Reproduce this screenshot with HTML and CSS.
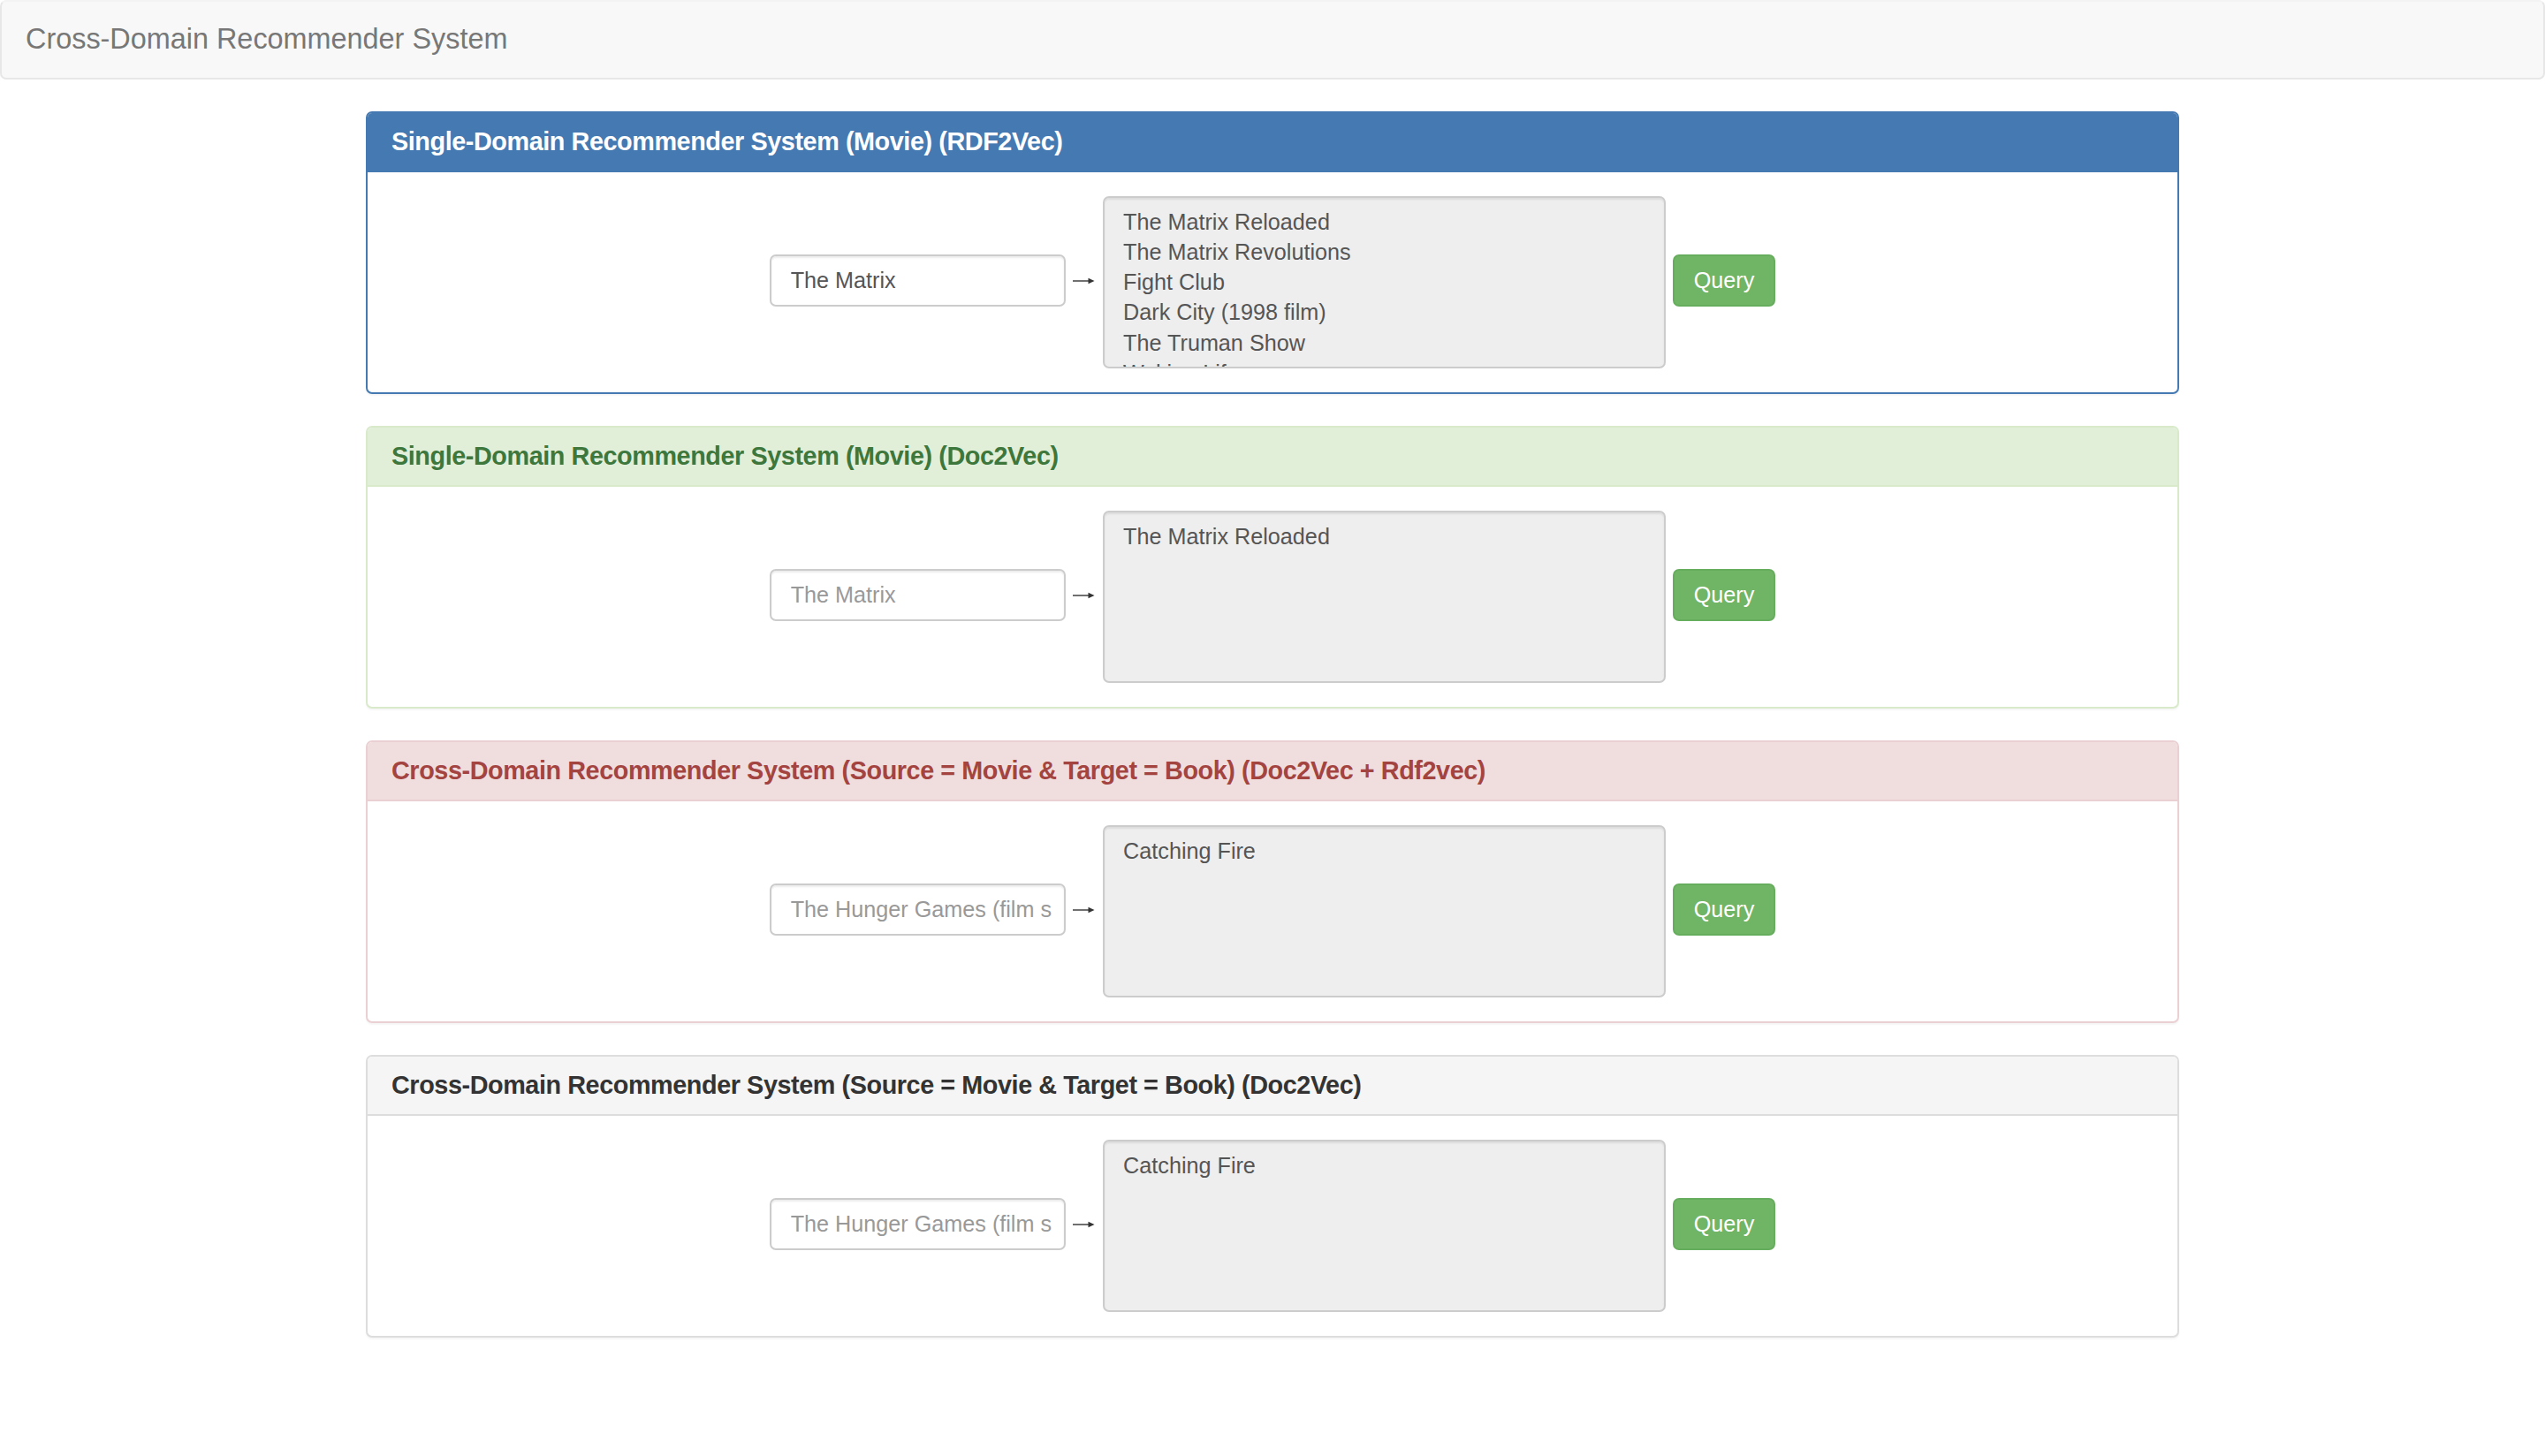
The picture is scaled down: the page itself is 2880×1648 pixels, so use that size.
FILE: index.html
```html
<!DOCTYPE html>
<html lang="en">
<head>
<meta charset="utf-8">
<title>Cross-Domain Recommender System</title>
<link rel="stylesheet" href="styles.css">
</head>
<body>
<nav class="navbar">
  <span class="brand">Cross-Domain Recommender System</span>
</nav>
<main class="container">
  <section class="panel panel-primary">
    <div class="panel-heading"><h3 class="panel-title">Single-Domain Recommender System (Movie) (RDF2Vec)</h3></div>
    <div class="panel-body">
      <div class="query-row">
        <input class="form-control" type="text" value="The Matrix">
        <span class="arrow" aria-label="→"><svg width="25" height="10" viewBox="0 0 25 10"><path d="M0 5H21" stroke="#333" stroke-width="1.4" fill="none"/><path d="M17.5 1.8L24.5 5L17.5 8.2Z" fill="#333"/></svg></span>
        <textarea class="results" readonly>The Matrix Reloaded
The Matrix Revolutions
Fight Club
Dark City (1998 film)
The Truman Show
Waking Life</textarea>
        <button class="btn btn-success" type="button">Query</button>
      </div>
    </div>
  </section>

  <section class="panel panel-success">
    <div class="panel-heading"><h3 class="panel-title">Single-Domain Recommender System (Movie) (Doc2Vec)</h3></div>
    <div class="panel-body">
      <div class="query-row">
        <input class="form-control" type="text" placeholder="The Matrix">
        <span class="arrow" aria-label="→"><svg width="25" height="10" viewBox="0 0 25 10"><path d="M0 5H21" stroke="#333" stroke-width="1.4" fill="none"/><path d="M17.5 1.8L24.5 5L17.5 8.2Z" fill="#333"/></svg></span>
        <textarea class="results" readonly>The Matrix Reloaded</textarea>
        <button class="btn btn-success" type="button">Query</button>
      </div>
    </div>
  </section>

  <section class="panel panel-danger">
    <div class="panel-heading"><h3 class="panel-title">Cross-Domain Recommender System (Source = Movie &amp; Target = Book) (Doc2Vec + Rdf2vec)</h3></div>
    <div class="panel-body">
      <div class="query-row">
        <input class="form-control" type="text" placeholder="The Hunger Games (film series)">
        <span class="arrow" aria-label="→"><svg width="25" height="10" viewBox="0 0 25 10"><path d="M0 5H21" stroke="#333" stroke-width="1.4" fill="none"/><path d="M17.5 1.8L24.5 5L17.5 8.2Z" fill="#333"/></svg></span>
        <textarea class="results" readonly>Catching Fire</textarea>
        <button class="btn btn-success" type="button">Query</button>
      </div>
    </div>
  </section>

  <section class="panel panel-default">
    <div class="panel-heading"><h3 class="panel-title">Cross-Domain Recommender System (Source = Movie &amp; Target = Book) (Doc2Vec)</h3></div>
    <div class="panel-body">
      <div class="query-row">
        <input class="form-control" type="text" placeholder="The Hunger Games (film series)">
        <span class="arrow" aria-label="→"><svg width="25" height="10" viewBox="0 0 25 10"><path d="M0 5H21" stroke="#333" stroke-width="1.4" fill="none"/><path d="M17.5 1.8L24.5 5L17.5 8.2Z" fill="#333"/></svg></span>
        <textarea class="results" readonly>Catching Fire</textarea>
        <button class="btn btn-success" type="button">Query</button>
      </div>
    </div>
  </section>
</main>
</body>
</html>
```

FILE: styles.css
```css
* {
  box-sizing: border-box;
}

html, body {
  margin: 0;
  padding: 0;
  background: #fff;
}

body {
  font-family: "Liberation Sans", Arial, Helvetica, sans-serif;
  font-size: 25.2px;
  line-height: 36px;
  color: #333;
}

/* Navbar */
.navbar {
  display: flex;
  align-items: center;
  height: 90px;
  background: #f8f8f8;
  border: 2px solid #e7e7e7;
  border-top-color: #f3f3f3;
  border-radius: 7px;
  margin-bottom: 36px;
  padding-left: 27px;
}

.brand {
  font-size: 32.4px;
  line-height: 36px;
  color: #777;
  margin-top: -2px;
}

/* Container */
.container {
  width: 2052px;
  margin: 0 auto;
}

/* Panels */
.panel {
  border: 2px solid #ddd;
  border-radius: 7px;
  margin-bottom: 36px;
  background: #fff;
  box-shadow: 0 2px 2px rgba(0, 0, 0, 0.04);
}

.panel-heading {
  padding: 17px 27px;
  border-bottom: 2px solid transparent;
  border-radius: 5px 5px 0 0;
}

.panel-title {
  margin: 0;
  font-size: 28.8px;
  line-height: 31px;
  font-weight: bold;
  letter-spacing: -0.43px;
}

.panel-body {
  padding: 27px;
}

.panel-primary {
  border-color: #4479b1;
}
.panel-primary .panel-heading {
  background: #4479b1;
  border-bottom-color: #4479b1;
  color: #fff;
}

.panel-success {
  border-color: #d9eacb;
}
.panel-success .panel-heading {
  background: #e1efd9;
  border-bottom-color: #d9eacb;
  color: #3e773c;
}

.panel-danger {
  border-color: #ebd0d3;
}
.panel-danger .panel-heading {
  background: #f0dede;
  border-bottom-color: #ebd0d3;
  color: #a44441;
}

.panel-default {
  border-color: #dddddd;
}
.panel-default .panel-heading {
  background: #f5f5f5;
  border-bottom-color: #dddddd;
  color: #333;
}

/* Query row */
.query-row {
  display: flex;
  justify-content: center;
  align-items: center;
}

.form-control {
  width: 335px;
  height: 59px;
  margin-bottom: 4px;
  padding: 0 14px 0 21.6px;
  border: 2px solid #cccccc;
  border-radius: 7px;
  background: #fff;
  box-shadow: inset 0 2px 2px rgba(0, 0, 0, 0.075);
  font-family: inherit;
  font-size: 25.2px;
  color: #555;
  outline: none;
}

.form-control::placeholder {
  color: #999;
  opacity: 1;
}

.arrow {
  display: flex;
  justify-content: center;
  align-items: center;
  width: 41.4px;
  height: 36px;
  margin-bottom: 3px;
}

.arrow svg {
  display: block;
}

.results {
  width: 637px;
  height: 195px;
  margin-right: 8.6px;
  padding: 9.8px 21.6px;
  border: 2px solid #cccccc;
  border-radius: 7px;
  background: #eeeeee;
  box-shadow: inset 0 2px 2px rgba(0, 0, 0, 0.075);
  font-family: inherit;
  font-size: 25.2px;
  line-height: 34.2px;
  color: #555;
  overflow: hidden;
  resize: none;
  outline: none;
}

.btn {
  height: 59px;
  margin-bottom: 4px;
  padding: 0 21.6px;
  border: 2px solid transparent;
  border-radius: 7px;
  font-family: inherit;
  font-size: 25.2px;
  line-height: 1;
  cursor: pointer;
}

.btn-success {
  background: #70b466;
  border-color: #66ad5d;
  color: #fff;
}
```
